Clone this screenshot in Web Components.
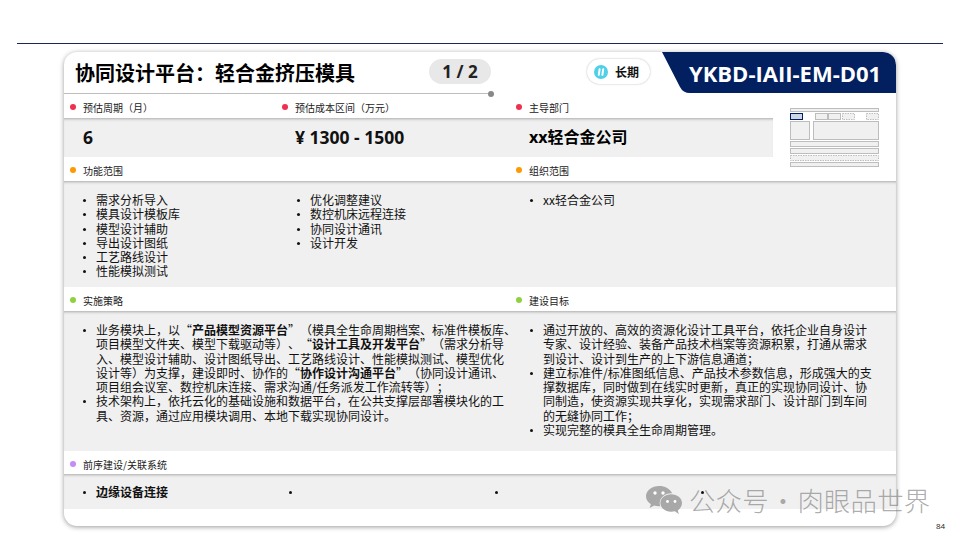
<!DOCTYPE html>
<html lang="zh-CN">
<head>
<meta charset="utf-8">
<title>协同设计平台</title>
<style>
    body { margin: 0; background: #fff; font-family: "Open Sans", "Noto Sans CJK SC", sans-serif; color: #111; text-spacing-trim: space-all; }
</style>
</head>
<body>
<bp-page>
    <bp-header>
        <span slot="title">协同设计平台<span style="font-family:'Noto Sans CJK TC',sans-serif">：</span>轻合金挤压模具</span>
        <span slot="pager">1 / 2</span>
        <span slot="badge">长期</span>
        <span slot="code">YKBD-IAII-EM-D01</span>
    </bp-header>

    <bp-labels>
        <bp-label color="#f0304f">预估周期（月）</bp-label>
        <bp-label color="#f0304f">预估成本区间（万元）</bp-label>
        <bp-label color="#f0304f">主导部门</bp-label>
    </bp-labels>
    <bp-band style="--h:39px;--cols:212px 234px 1fr;--pad:0 0 0 19px;--align:center;--end:123px;--size:16px;--weight:700">
        <div style="font-size:17.5px">6</div>
        <div style="font-size:17.5px">¥ 1300 - 1500</div>
        <div style="color:#000">xx轻合金公司</div>
    </bp-band>

    <bp-labels>
        <bp-label color="#ff9900">功能范围</bp-label>
        <span></span>
        <bp-label color="#ff9900">组织范围</bp-label>
    </bp-labels>
    <bp-band style="--h:106px;--cols:214px 233px 1fr">
        <div>
            <bp-item>需求分析导入</bp-item>
            <bp-item>模具设计模板库</bp-item>
            <bp-item>模型设计辅助</bp-item>
            <bp-item>导出设计图纸</bp-item>
            <bp-item>工艺路线设计</bp-item>
            <bp-item>性能模拟测试</bp-item>
        </div>
        <div>
            <bp-item>优化调整建议</bp-item>
            <bp-item>数控机床远程连接</bp-item>
            <bp-item>协同设计通讯</bp-item>
            <bp-item>设计开发</bp-item>
        </div>
        <div>
            <bp-item>xx轻合金公司</bp-item>
        </div>
    </bp-band>

    <bp-labels>
        <bp-label color="#8fd13f">实施策略</bp-label>
        <span></span>
        <bp-label color="#8fd13f">建设目标</bp-label>
    </bp-labels>
    <bp-band style="--h:140px;--cols:447px 1fr">
        <div>
            <bp-item>业务模块上，以“<b>产品模型资源平台</b>”（模具全生命周期档案、标准件模板库、<br>项目模型文件夹、模型下载驱动等）、“<b>设计工具及开发平台</b>”（需求分析导<br>入、模型设计辅助、设计图纸导出、工艺路线设计、性能模拟测试、模型优化<br>设计等）为支撑，建设即时、协作的“<b>协作设计沟通平台</b>”（协同设计通讯、<br>项目组会议室、数控机床连接、需求沟通/任务派发工作流转等）；</bp-item>
            <bp-item>技术架构上，依托云化的基础设施和数据平台，在公共支撑层部署模块化的工<br>具、资源，通过应用模块调用、本地下载实现协同设计。</bp-item>
        </div>
        <div>
            <bp-item>通过开放的、高效的资源化设计工具平台，依托企业自身设计<br>专家、设计经验、装备产品技术档案等资源积累，打通从需求<br>到设计、设计到生产的上下游信息通道；</bp-item>
            <bp-item>建立标准件/标准图纸信息、产品技术参数信息，形成强大的支<br>撑数据库，同时做到在线实时更新，真正的实现协同设计、协<br>同制造，使资源实现共享化，实现需求部门、设计部门到车间<br>的无缝协同工作；</bp-item>
            <bp-item>实现完整的模具全生命周期管理。</bp-item>
        </div>
    </bp-band>

    <bp-labels style="--row:23px">
        <bp-label color="#c58cf5">前序建设/关联系统</bp-label>
    </bp-labels>
    <bp-band style="--h:35px;--cols:206px 206px 206px 1fr;--pad:11px 0 0 18px;--weight:700">
        <bp-item>边缘设备连接</bp-item>
        <bp-item></bp-item>
        <bp-item></bp-item>
        <bp-item></bp-item>
    </bp-band>

    <bp-thumb slot="over"></bp-thumb>
    <bp-watermark slot="over">公众号 · 肉眼品世界</bp-watermark>
</bp-page>

<script>
class BpPage extends HTMLElement {
    constructor() {
        super();
        this.attachShadow({mode:'open'}).innerHTML = `
            <style>
                :host { display: block; width: 960px; height: 540px; box-sizing: border-box; padding-top: 43px; position: relative; overflow: hidden; }
                .rule { height: 1px; margin: 0 17px 8px; background: #1b2a52; }
                .card {
                    width: 832px; height: 474px; margin-left: 64px; position: relative;
                    background: #fff; border-radius: 13px;
                    box-shadow: 0 1px 5px rgba(0,0,0,.4);
                    overflow: hidden;
                }
                .num { position: absolute; left: 936px; top: 521px; font-size: 8px; line-height: 10px; color: #222; }
            </style>
            <div class="rule"></div>
            <div class="card"><slot></slot></div>
            <slot name="over"></slot>
            <div class="num">84</div>
        `;
    }
}

class BpHeader extends HTMLElement {
    constructor() {
        super();
        this.attachShadow({mode:'open'}).innerHTML = `
            <style>
                :host { display: block; }
                .top { display: flex; align-items: center; height: 41px; }
                .title { font-size: 20px; font-weight: 700; color: #000; margin-left: 11px; width: 354px; white-space: nowrap; font-family: "Noto Sans CJK SC", sans-serif; }
                .pager {
                    width: 62px; height: 25px; border-radius: 13px; background: #e8e8e8;
                    display: flex; align-items: center; justify-content: center;
                    font-size: 17px; font-weight: 700; color: #222; margin-bottom: 3px;
                }
                .badge {
                    display: flex; align-items: center; gap: 7px; box-sizing: border-box;
                    width: 63px; height: 25px; margin-left: 96px; padding-left: 7px; border-radius: 13px;
                    background: #fff; box-shadow: 0 0 2px rgba(0,0,0,.3);
                    font-size: 12px; font-weight: 700; color: #111; margin-bottom: 2px;
                    font-family: "Noto Sans CJK SC", sans-serif;
                }
                .code {
                    margin-left: auto; width: 234px; height: 41px; box-sizing: border-box; padding-left: 27px;
                    display: flex; align-items: center;
                    background: #02205f; color: #fff; font-size: 22px; font-weight: 700; white-space: nowrap;
                    clip-path: path('M0 0 H221 Q234 0 234 13 V41 H28 Q21 41 18 35 Z');
                }
                .line { height: 1px; width: 427px; background: #bdbdbd; position: relative; }
                .line::after { content: ""; position: absolute; right: -3px; top: -2.5px; width: 6px; height: 6px; border-radius: 50%; background: #888; }
            </style>
            <div class="top">
                <div class="title"><slot name="title"></slot></div>
                <div class="pager"><slot name="pager"></slot></div>
                <div class="badge">
                    <svg width="14" height="14" viewBox="0 0 14 14">
                        <circle cx="7" cy="7" r="7" fill="#4fcfe8"/>
                        <path d="M5.6 4.2 L4.8 9.8 M9.2 4.2 L8.4 9.8" stroke="#fff" stroke-width="2" stroke-linecap="round"/>
                    </svg>
                    <slot name="badge"></slot>
                </div>
                <div class="code"><slot name="code"></slot></div>
            </div>
            <div class="line"></div>
        `;
    }
}

class BpLabels extends HTMLElement {
    constructor() {
        super();
        this.attachShadow({mode:'open'}).innerHTML = `
            <style>
                :host {
                    display: grid; grid-template-columns: 212px 234px 1fr;
                    height: var(--row, 24px); box-sizing: border-box; padding-top: 4px; align-items: center;
                    position: relative;
                }
            </style>
            <slot></slot>
        `;
    }
}

class BpLabel extends HTMLElement {
    constructor() {
        super();
        this.attachShadow({mode:'open'}).innerHTML = `
            <style>
                :host { display: flex; align-items: center; gap: 7px; padding-left: 6px; font-size: 10px; line-height: 14px; color: #222; white-space: nowrap; font-family: "Noto Sans CJK SC", sans-serif; }
                i { width: 6px; height: 6px; border-radius: 50%; margin-top: -2px; flex: none; }
            </style>
            <i></i><slot></slot>
        `;
    }

    connectedCallback() {
        this.shadowRoot.querySelector('i').style.background = this.getAttribute('color');
    }
}

class BpBand extends HTMLElement {
    constructor() {
        super();
        this.attachShadow({mode:'open'}).innerHTML = `
            <style>
                :host {
                    display: grid; grid-template-columns: var(--cols);
                    align-items: var(--align, start);
                    height: var(--h); box-sizing: border-box;
                    margin-right: var(--end, 0);
                    padding: var(--pad, 12px 0 0 18px);
                    background: #f0f0f0;
                    box-shadow: inset 0 3px 3px -2px rgba(0,0,0,.3);
                    font-size: var(--size, 12px);
                    font-weight: var(--weight, 400);
                    line-height: 14.3px;
                    color: #111;
                }
            </style>
            <slot></slot>
        `;
    }
}

class BpItem extends HTMLElement {
    constructor() {
        super();
        this.attachShadow({mode:'open'}).innerHTML = `
            <style>
                :host { display: flex; white-space: nowrap; font-family: "Noto Sans CJK SC", sans-serif; }
                i { flex: none; width: 3px; height: 3px; margin: 6px 10px 0 1px; border-radius: 50%; background: #111; }
            </style>
            <i></i><div><slot></slot></div>
        `;
    }
}

class BpThumb extends HTMLElement {
    constructor() {
        super();
        this.attachShadow({mode:'open'}).innerHTML = `
            <style>
                :host { position: absolute; left: 790px; top: 108px; display: block; width: 90px; height: 60px; }
                svg { display: block; }
                rect { fill: #f0f0f0; stroke: #bdbdbd; stroke-width: 1; }
                .dash { stroke-dasharray: 1.5 1; }
            </style>
            <svg width="90" height="60" viewBox="0 0 90 60">
                <rect x=".5" y=".5" width="88" height="3"/>
                <rect x=".5" y="5.5" width="12" height="6" style="fill:#cdd5e6;stroke:#02205f"/>
                <rect x="25.5" y="5.5" width="12" height="6"/>
                <rect x="38.5" y="5.5" width="12" height="6"/>
                <rect class="dash" x="52.5" y="5.5" width="12" height="6"/>
                <rect class="dash" x="76.5" y="5.5" width="12" height="6"/>
                <rect x=".5" y="13.5" width="19" height="18"/>
                <rect x="23.5" y="13.5" width="65" height="18"/>
                <rect x=".5" y="33.5" width="88" height="5"/>
                <rect x=".5" y="40.5" width="88" height="5"/>
                <rect class="dash" x=".5" y="47.5" width="88" height="5"/>
                <rect x=".5" y="54.5" width="88" height="4"/>
            </svg>
        `;
    }
}

class BpWatermark extends HTMLElement {
    constructor() {
        super();
        this.attachShadow({mode:'open'}).innerHTML = `
            <style>
                :host {
                    position: absolute; left: 646px; top: 483px; display: flex; align-items: center; gap: 7px;
                    font-size: 26.4px; line-height: 34px; letter-spacing: .2px; word-spacing: -5px; color: rgba(120,120,120,.62); white-space: nowrap;
                    font-family: "Noto Sans CJK SC", sans-serif; font-weight: 300;
                }
            </style>
            <svg width="36" height="30" viewBox="0 0 36 30">
                <path fill="#a8a8a8" d="M13 1C6 1 0 5.6 0 11.3c0 3.3 1.9 6 4.9 8L3.6 23l4.5-2.4c1.6.4 3.2.7 4.9.7h1.2a10 10 0 0 1-.5-3c0-5.600 5.200-10 11.400-10h1.100C24 3.700 19 1 13 1z"/>
                <path fill="#a8a8a8" d="M36 18c0-4.900-4.900-8.800-10.800-8.800S14.400 13.100 14.400 18s4.900 8.800 10.800 8.800c1.300 0 2.500-.2 3.700-.5L32.800 29l-1-3.500C34.300 23.700 36 21 36 18z"/>
                <circle cx="9" cy="8" r="1.700" fill="#fff"/>
                <circle cx="17" cy="8" r="1.700" fill="#fff"/>
                <circle cx="21.500" cy="16.500" r="1.400" fill="#fff"/>
                <circle cx="29" cy="16.500" r="1.400" fill="#fff"/>
            </svg>
            <slot></slot>
        `;
    }
}

customElements.define('bp-page', BpPage);
customElements.define('bp-header', BpHeader);
customElements.define('bp-labels', BpLabels);
customElements.define('bp-label', BpLabel);
customElements.define('bp-band', BpBand);
customElements.define('bp-item', BpItem);
customElements.define('bp-thumb', BpThumb);
customElements.define('bp-watermark', BpWatermark);
</script>
</body>
</html>
